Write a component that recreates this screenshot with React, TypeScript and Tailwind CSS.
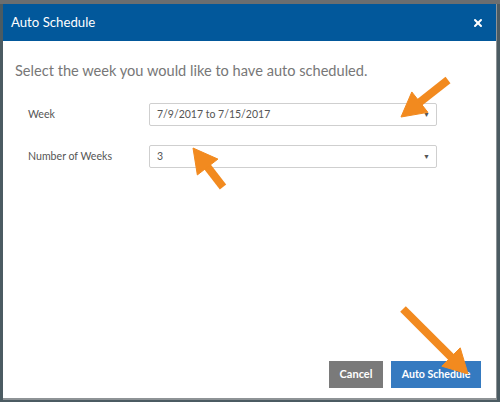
import { X } from 'lucide-react'

const font = { fontFamily: 'Lato, "Open Sans", Arial, sans-serif' }

function Select({ value }: { value: string }) {
  return (
    <div className="flex h-[23px] w-[288px] items-center justify-between rounded-[2px] border border-[#cfcfcf] bg-white pl-[7px] pr-[6px] text-[10.5px] text-[#555]">
      <span>{value}</span>
      <span className="text-[7px] text-[#555]">▼</span>
    </div>
  )
}

function Arrow({ x1, y1, x2, y2 }: { x1: number; y1: number; x2: number; y2: number }) {
  const dx = x2 - x1
  const dy = y2 - y1
  const len = Math.hypot(dx, dy)
  const ux = dx / len
  const uy = dy / len
  const head = 24
  const bx = x2 - ux * head
  const by = y2 - uy * head
  const w = 13
  return (
    <g fill="#f28a1f" stroke="#f28a1f">
      <line x1={x1} y1={y1} x2={bx + ux * 2} y2={by + uy * 2} strokeWidth={8} strokeLinecap="butt" />
      <polygon
        points={`${x2},${y2} ${bx - uy * w},${by + ux * w} ${bx + uy * w},${by - ux * w}`}
        strokeWidth={1}
        strokeLinejoin="round"
      />
    </g>
  )
}

export default function App() {
  return (
    <div className="relative h-[402px] w-[500px] overflow-hidden bg-[#4b5b62]" style={font}>
      <div className="h-[4px] w-full bg-[#6b6e70]" />
      <div className="ml-[3px] flex h-[396px] w-[494px] flex-col border-r border-b-2 border-[#8e9396] bg-white">
        <div className="flex h-[37px] shrink-0 items-center justify-between bg-[#02589b] pl-[8px] pr-[12px]">
          <span className="text-[13.2px] text-white">Auto Schedule</span>
          <X size={12} strokeWidth={4} className="text-white" />
        </div>

        <div className="flex flex-1 flex-col px-[12px]">
          <p className="mt-[20px] text-[14.6px] leading-[20px] text-[#777]">
            Select the week you would like to have auto scheduled.
          </p>

          <div className="mt-[22px] flex flex-col gap-[19px] pl-[13px]">
            <div className="flex items-center">
              <span className="w-[121px] text-[10.6px] text-[#555]">Week</span>
              <Select value="7/9/2017 to 7/15/2017" />
            </div>
            <div className="flex items-center">
              <span className="w-[121px] text-[10.6px] text-[#555]">Number of Weeks</span>
              <Select value="3" />
            </div>
          </div>

          <div className="mt-auto mb-[10px] mr-[3px] flex justify-end gap-[8px]">
            <button className="h-[27px] w-[54px] bg-[#7a7a7a] text-[11px] font-bold text-white">Cancel</button>
            <button className="h-[27px] w-[90px] bg-[#357ac0] text-[10.6px] font-bold text-white">Auto Schedule</button>
          </div>
        </div>
      </div>

      <svg className="pointer-events-none absolute inset-0" width={500} height={402}>
        <Arrow x1={448} y1={80} x2={401} y2={117} />
        <Arrow x1={223} y1={187} x2={193} y2={148} />
        <Arrow x1={403} y1={309} x2={468} y2={374} />
      </svg>
    </div>
  )
}
